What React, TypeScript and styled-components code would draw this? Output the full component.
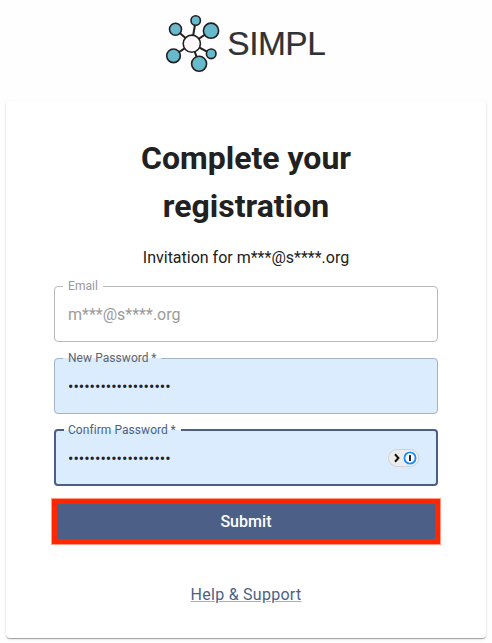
import React from 'react';
import styled, { createGlobalStyle, css } from 'styled-components';

const GlobalStyle = createGlobalStyle`
  * { box-sizing: border-box; }
  body {
    margin: 0;
    background: #fefefe;
    color: #212121;
    font-family: Roboto, sans-serif;
    font-size: 16px;
    line-height: 24px;
    letter-spacing: 0;
  }
`;

const Page = styled.main`
  display: flex;
  flex-direction: column;
  align-items: center;
  height: 643px;
  overflow: hidden;
`;

const Brand = styled.header`
  height: 101px;
  padding-top: 10px;
`;

const LogoSvg = styled.svg`
  display: block;
`;

const Card = styled.section`
  display: flex;
  flex-direction: column;
  align-items: center;
  width: 480px;
  height: 537px;
  padding: 33px 48px 0;
  background: #fff;
  border-radius: 4px;
  box-shadow: 0 2px 1px -1px rgba(0, 0, 0, 0.2), 0 1px 1px rgba(0, 0, 0, 0.14),
    0 1px 3px rgba(0, 0, 0, 0.12);
`;

const Title = styled.h1`
  width: 260px;
  margin: 0;
  font-size: 32px;
  font-weight: 700;
  line-height: 48px;
  text-align: center;
`;

const Invitation = styled.p`
  margin: 16px 0;
`;

const Form = styled.form`
  display: flex;
  flex-direction: column;
  gap: 16px;
  width: 384px;
`;

type Tone = 'disabled' | 'filled' | 'focused';

const Field = styled.div<{ $tone: Tone }>`
  position: relative;
  display: flex;
  align-items: center;
  justify-content: space-between;
  height: 56px;
  padding: 0 18px 0 14px;
  border-radius: 4px;
  background: ${({ $tone }) => ($tone === 'disabled' ? '#fff' : '#dcecff')};
  color: ${({ $tone }) => ($tone === 'disabled' ? '#9b9b9b' : '#1f2125')};
`;

const Outline = styled.fieldset<{ $tone: Tone }>`
  position: absolute;
  inset: -9px 0 0;
  min-width: 0;
  margin: 0;
  padding: 0 8px;
  border: 1px solid #b9b9b9;
  border-radius: 4px;
  pointer-events: none;
  ${({ $tone }) => $tone === 'filled' && css`border-color: #a6b3c6;`}
  ${({ $tone }) => $tone === 'focused' && css`
    border: 2px solid #4b5f86;
  `}
`;

const Label = styled.legend<{ $tone: Tone }>`
  height: 18px;
  padding: 0 5px;
  font-size: 12px;
  line-height: 18px;
  letter-spacing: 0.06px;
  white-space: pre;
  color: ${({ $tone }) =>
    $tone === 'disabled' ? '#999' : $tone === 'filled' ? '#5f646b' : '#4b5f86'};
  ${({ $tone }) => $tone === 'focused' && css`padding: 0 5px 0 4px;`}
`;

const Value = styled.span`
  padding-top: 1px;
`;

const ManagerBadge = styled.svg`
  display: block;
`;

const Submit = styled.button`
  height: 45px;
  margin: -3px -2px 0;
  padding: 0;
  border: 5px solid #ff2600;
  outline: 0.5px solid #ff9a88;
  outline-offset: -0.5px;
  background: #4c6087;
  color: #fff;
  font: 500 16px/24px Roboto, sans-serif;
  letter-spacing: 0.05px;
`;

const HelpLink = styled.a`
  margin-top: 39px;
  color: #4b5f86;
  letter-spacing: 0.27px;
  text-decoration: underline;
  text-decoration-color: rgba(75, 95, 134, 0.5);
`;

const satellites = [
  { x: 195.7, y: 20.5, r: 4.7 },
  { x: 211, y: 30.7, r: 7.6 },
  { x: 175.5, y: 29.3, r: 6 },
  { x: 173.5, y: 55.8, r: 6.8 },
  { x: 211.2, y: 53.8, r: 4.8 },
  { x: 199.1, y: 63.8, r: 7.5 },
];

const Logo = () => (
  <LogoSvg width="172" height="66" viewBox="160 10 172 66" role="img" aria-label="SIMPL">
    <g stroke="#231f20" strokeWidth="1.6">
      {satellites.map((s) => (
        <line key={s.x} x1="191.8" y1="43.5" x2={s.x} y2={s.y} strokeWidth="2" />
      ))}
      {satellites.map((s) => (
        <circle key={s.x} cx={s.x} cy={s.y} r={s.r} fill="#67b9cc" />
      ))}
      <circle cx="191.8" cy="43.7" r="8.6" fill="#fdf9fb" />
    </g>
    <text x="227.3" y="55" fill="#303233" stroke="#303233" strokeWidth="0.2" fontFamily="Liberation Sans, sans-serif" fontSize="33.5" textLength="98.5">
      SIMPL
    </text>
  </LogoSvg>
);

const TextField = ({ label, value, tone, children }: {
  label: string;
  value: string;
  tone: Tone;
  children?: React.ReactNode;
}) => (
  <Field $tone={tone}>
    <Value>{value}</Value>
    {children}
    <Outline $tone={tone}>
      <Label $tone={tone}>{label}</Label>
    </Outline>
  </Field>
);

const dots = '•'.repeat(19);

export default function App() {
  return (
    <>
      <GlobalStyle />
      <Page>
        <Brand>
          <Logo />
        </Brand>
        <Card>
          <Title>Complete your registration</Title>
          <Invitation>Invitation for m***@s****.org</Invitation>
          <Form>
            <TextField label="Email" value="m***@s****.org" tone="disabled" />
            <TextField label={'New Password\u2009*'} value={dots} tone="filled" />
            <TextField label={'Confirm Password\u2009*'} value={dots} tone="focused">
              <ManagerBadge width="32" height="18" viewBox="0 0 32 18">
                <rect x="0.5" y="0.5" width="30.5" height="17" rx="8.5" fill="#ececec" stroke="#cfd2d6" />
                <path d="M7 5.3 10.4 9 7 12.7" fill="none" stroke="#111" strokeWidth="2" />
                <circle cx="22" cy="9" r="7.2" fill="#fff" />
                <circle cx="22" cy="9" r="5.6" fill="#fff" stroke="#1a8cff" strokeWidth="1.9" />
                <rect x="21" y="6" width="2" height="6" rx="0.5" fill="#222" />
              </ManagerBadge>
            </TextField>
            <Submit type="button">Submit</Submit>
          </Form>
          <HelpLink>Help &amp; Support</HelpLink>
        </Card>
      </Page>
    </>
  );
}
